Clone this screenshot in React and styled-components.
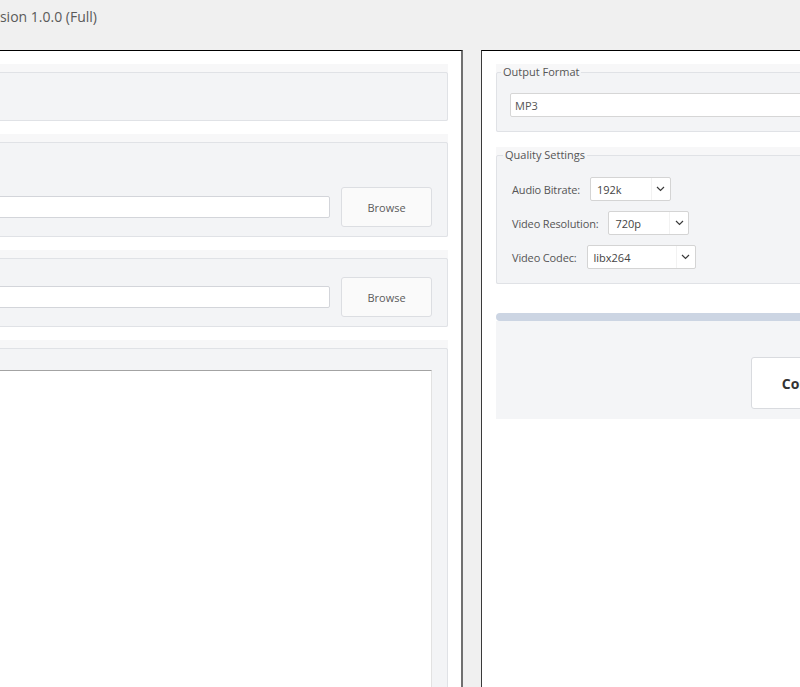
import React from "react";
import styled, { createGlobalStyle } from "styled-components";

const GlobalStyle = createGlobalStyle`
  html, body {
    margin: 0;
    padding: 0;
    height: 100%;
    overflow: hidden;
    background: #f0f0f0;
  }
  body {
    font-family: "Open Sans", "Noto Sans", Arial, sans-serif;
    color: #555;
  }
  * { box-sizing: border-box; }
`;

const Window = styled.div`
  margin-left: -300px;
  width: 1500px;
  height: 687px;
  display: flex;
  flex-direction: column;
  background: #f0f0f0;
`;

const Header = styled.header`
  height: 50px;
  flex: none;
  padding: 8px 0 0 278px;
  font-size: 14px;
  line-height: 18px;
  color: #5a5a5a;
`;

const Main = styled.div`
  flex: 1;
  display: flex;
  gap: 18px;
  min-height: 0;
`;

const LeftPanel = styled.section`
  width: 763px;
  background: #fff;
  border-top: 1px solid #000;
  border-left: 1px solid #000;
  border-right: 2px solid #707070;
  padding: 13px 13px 0 20px;
  display: flex;
  flex-direction: column;
  gap: 13px;
`;

const RightPanel = styled.section`
  width: 656px;
  background: #fff;
  border-top: 1px solid #000;
  border-left: 1px solid #3a3a3a;
  padding: 13px 14px 0 14px;
  display: flex;
  flex-direction: column;
`;

/* labelled frame: the shell shows above the border line, behind the legend */
const GroupShell = styled.div`
  background: #f7f7f8;
  margin-bottom: ${p => p.$after || 0}px;
`;

const Group = styled.fieldset`
  margin: 0;
  min-width: 0;
  padding: ${p => p.$pad || "10px 15px"};
  border: 1px solid #e0e2e6;
  border-radius: 2px;
  background: #f3f4f6;
`;

const Legend = styled.legend`
  margin-left: -9px;
  padding: 0 2px;
  font-size: 11px;
  line-height: 16px;
  color: #555;
`;

const NoteRow = styled.div`
  height: ${p => p.$h || 20}px;
  display: flex;
  align-items: center;
  font-size: 11px;
  color: #555;
`;

const FileRow = styled.div`
  height: 40px;
  display: flex;
  align-items: center;
  gap: 11px;
`;

const PathInput = styled.div`
  flex: 1;
  height: 22px;
  background: #fff;
  border: 1px solid #d3d5da;
  border-radius: 2px;
`;

const BrowseButton = styled.button`
  width: 91px;
  height: 40px;
  flex: none;
  background: #fafafa;
  border: 1px solid #dcdee2;
  border-radius: 3px;
  font-family: inherit;
  font-size: 11px;
  color: #5c5c5c;
  padding: 0;
`;

const LogBox = styled.div`
  height: 400px;
  background: #fff;
  border: 1px solid #e2e2e2;
  border-top-color: #a3a3a3;
`;

const FieldBox = styled.div`
  height: 24px;
  background: #fff;
  border: 1px solid #d6d6d6;
  border-radius: 2px;
  display: flex;
  align-items: center;
  padding-left: 4px;
  font-size: 11px;
  color: #555;
`;

const SettingsList = styled.div`
  display: flex;
  flex-direction: column;
  gap: 10px;
`;

const SettingRow = styled.div`
  display: flex;
  align-items: center;
  gap: 10px;
  height: 24px;
`;

const SettingLabel = styled.span`
  font-size: 11px;
  letter-spacing: -0.15px;
  color: #555;
`;

const Combo = styled.div`
  width: ${p => p.$w}px;
  height: 24px;
  background: #fff;
  border: 1px solid #d4d4d4;
  border-radius: 2px;
  display: flex;
  align-items: stretch;
`;

const ComboValue = styled.span`
  flex: 1;
  display: flex;
  align-items: center;
  padding-left: 6px;
  font-size: 11px;
  color: #444;
`;

const ComboArrow = styled.span`
  width: 19px;
  display: flex;
  align-items: center;
  justify-content: center;
  border-left: 1px solid #f2f2f2;
`;

const Progress = styled.div`
  height: 8px;
  margin-top: 29px;
  background: #ccd5e3;
  border-radius: 4px;
`;

const ActionBar = styled.div`
  background: #f4f5f7;
  display: flex;
  justify-content: center;
  padding: 36px 0 10px;
`;

const ConvertButton = styled.button`
  width: 118px;
  height: 52px;
  background: #fff;
  border: 1px solid #d9dbdf;
  border-radius: 3px;
  font-family: inherit;
  font-size: 14px;
  font-weight: 700;
  color: #333;
  padding: 0;
`;

const Chevron = () => (
  <svg width="9" height="6" viewBox="0 0 9 6" fill="none">
    <path d="M1 1 L4.5 4.5 L8 1" stroke="#3a3a3a" strokeWidth="1.2" />
  </svg>
);

const Select = ({ value, width }) => (
  <Combo $w={width}>
    <ComboValue>{value}</ComboValue>
    <ComboArrow>
      <Chevron />
    </ComboArrow>
  </Combo>
);

const App = () => {
  return (
    <>
      <GlobalStyle />
      <Window>
        <Header>Version 1.0.0 (Full)</Header>
        <Main>
          <LeftPanel>
            <GroupShell>
              <Group $pad="10px 15px 10px">
                <Legend>Conversion Mode</Legend>
                <NoteRow>Single file</NoteRow>
              </Group>
            </GroupShell>

            <GroupShell>
              <Group $pad="11px 15px 9px">
                <Legend>Input File</Legend>
                <NoteRow $h={26}>Select a file to convert:</NoteRow>
                <FileRow>
                  <PathInput />
                  <BrowseButton>Browse</BrowseButton>
                </FileRow>
              </Group>
            </GroupShell>

            <GroupShell>
              <Group $pad="11px 15px 9px">
                <Legend>Output Folder</Legend>
                <FileRow>
                  <PathInput />
                  <BrowseButton>Browse</BrowseButton>
                </FileRow>
              </Group>
            </GroupShell>

            <GroupShell>
              <Group $pad="14px 15px 0">
                <Legend>Log</Legend>
                <LogBox />
              </Group>
            </GroupShell>
          </LeftPanel>

          <RightPanel>
            <GroupShell $after={15}>
              <Group $pad="13px 13px 14px">
                <Legend>Output Format</Legend>
                <FieldBox>MP3</FieldBox>
              </Group>
            </GroupShell>

            <GroupShell>
              <Group $pad="14px 15px 14px">
                <Legend>Quality Settings</Legend>
                <SettingsList>
                  <SettingRow>
                    <SettingLabel>Audio Bitrate:</SettingLabel>
                    <Select value="192k" width={81} />
                  </SettingRow>
                  <SettingRow>
                    <SettingLabel>Video Resolution:</SettingLabel>
                    <Select value="720p" width={81} />
                  </SettingRow>
                  <SettingRow>
                    <SettingLabel>Video Codec:</SettingLabel>
                    <Select value="libx264" width={109} />
                  </SettingRow>
                </SettingsList>
              </Group>
            </GroupShell>

            <Progress />
            <ActionBar>
              <ConvertButton>Convert</ConvertButton>
            </ActionBar>
          </RightPanel>
        </Main>
      </Window>
    </>
  );
};

export default App;
